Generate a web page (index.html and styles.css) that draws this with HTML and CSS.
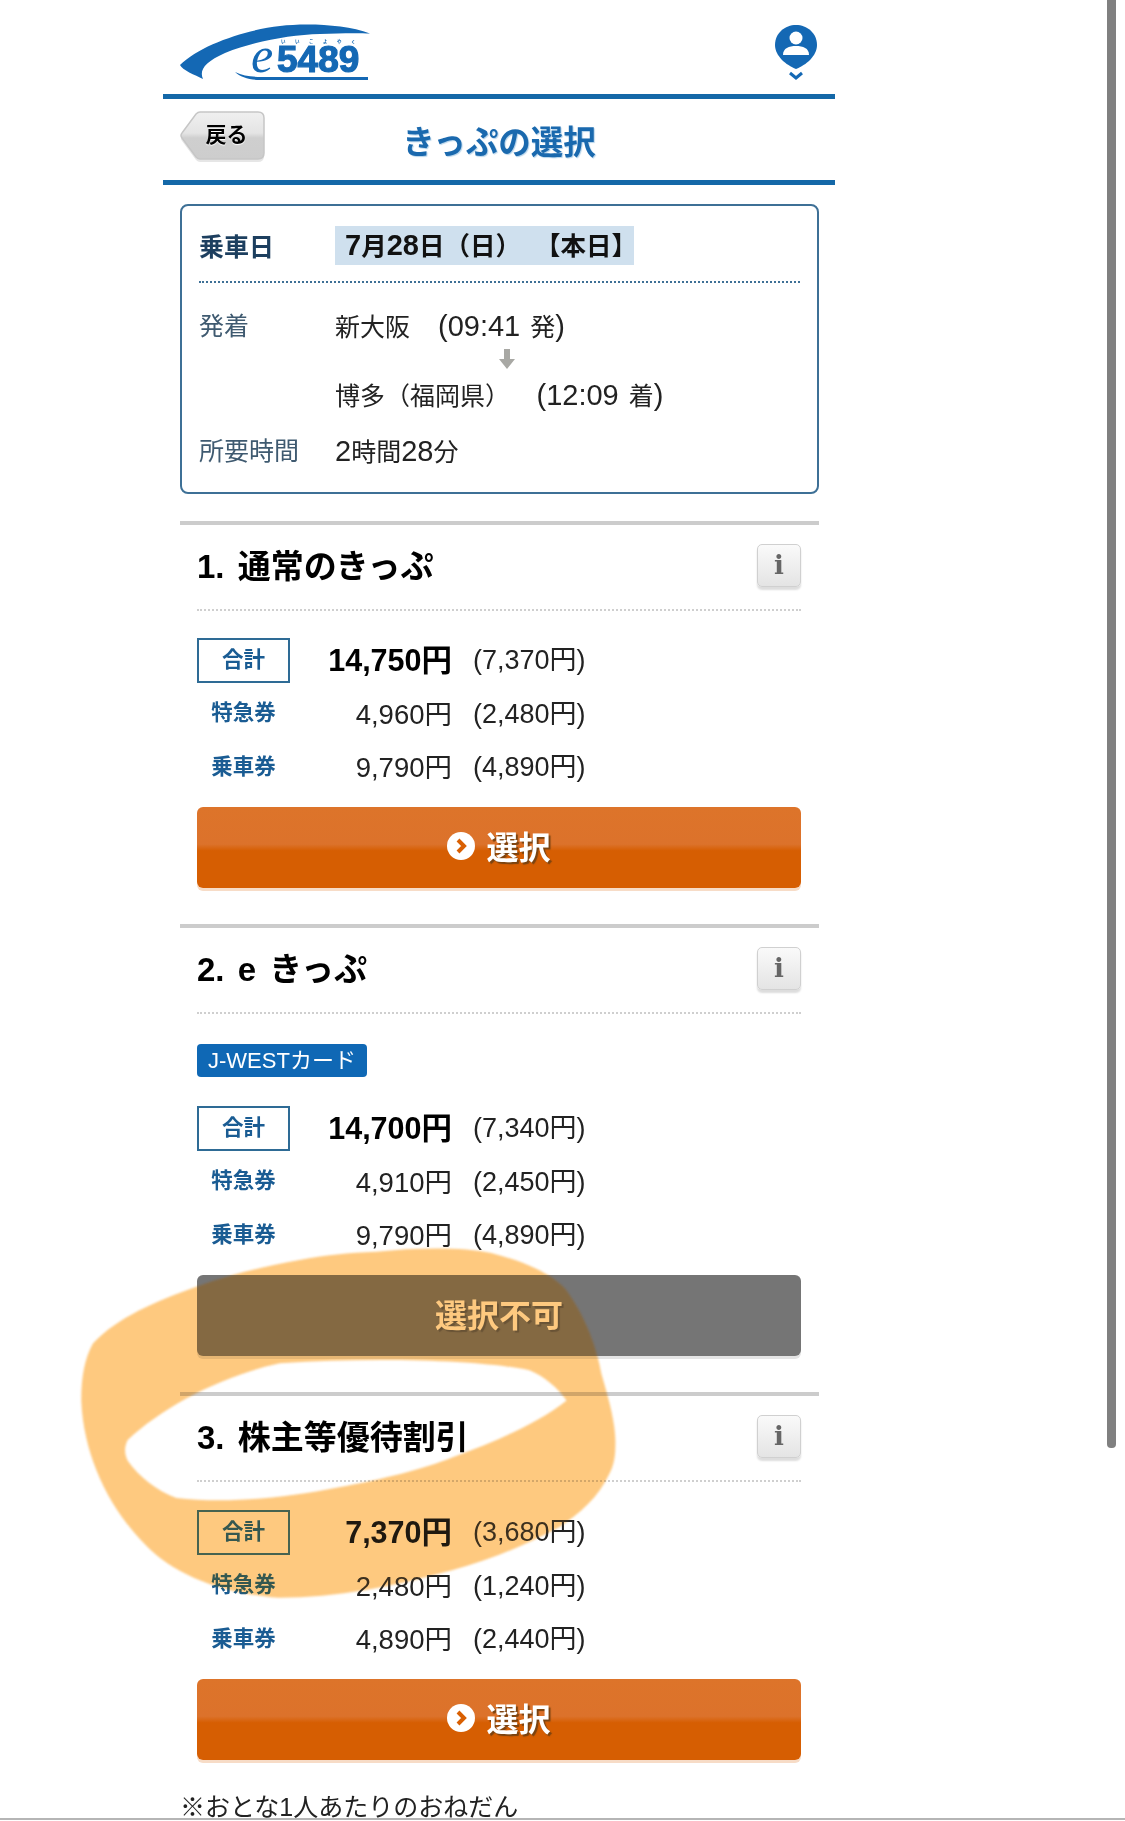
FILE: index.html
```html
<!DOCTYPE html>
<html lang="ja">
<head>
  <meta charset="utf-8">
  <title>きっぷの選択</title>
  <link rel="stylesheet" href="styles.css">
</head>
<body>
  <div class="page">
    <header class="site-header">
      <svg class="logo" viewBox="0 0 220 90" width="220" height="90">
        <path fill="#1468b4" d="M200 23.5C175 14 135 13 110 16C75 20 30 35 10 55C12 60 25 65 33 69C29 60 35 52 55 43C85 31 120 25 150 24C170 23 190 23 200 23.5Z"/>
        <path fill="#1468b4" d="M65 62C75 67 85 67 100 67L198 67L198 70L90 70C80 70 70 67 65 62Z"/>
        <text class="logo-e" x="81" y="62">e</text>
        <text class="logo-num" x="107" y="62">5489</text>
        <text class="logo-kana" x="111" y="33">いいこよやく</text>
      </svg>
      <svg class="user-icon" viewBox="0 0 44 60" width="44" height="60">
        <path fill="#1468b4" d="M22 2C33 2 43 10 43 22C43 33 32 42 22 46C12 42 1 33 1 22C1 10 11 2 22 2Z"/>
        <circle cx="22" cy="15" r="6.5" fill="#fff"/>
        <path fill="#fff" d="M9 32C9 25 15 23 22 23C29 23 35 25 35 32Z"/>
        <path fill="none" stroke="#1468b4" stroke-width="3" d="M16 50L22 55L28 50"/>
      </svg>
    </header>
    <nav class="title-bar">
      <a class="back-btn">
        <svg viewBox="0 0 85 52" width="85" height="52">
          <defs>
            <linearGradient id="backFill" x1="0" y1="0" x2="0" y2="1">
              <stop offset="0" stop-color="#f0f0f0"/>
              <stop offset="0.45" stop-color="#e4e4e4"/>
              <stop offset="0.55" stop-color="#cfcfcf"/>
              <stop offset="1" stop-color="#cdcdcd"/>
            </linearGradient>
          </defs>
          <path fill="#e6e6e6" d="M20 4H78Q84 4 84 10V45Q84 51 78 51H20Q18 51 16 49L2 30Q0 27.5 2 25L16 6Q18 4 20 4Z"/>
          <path fill="url(#backFill)" stroke="#c6c6c6" stroke-width="1.5" d="M20 1H78Q84 1 84 7V42Q84 48 78 48H20Q18 48 16 46L2 27Q0 24.5 2 22L16 3Q18 1 20 1Z"/>
        </svg>
        <span>戻る</span>
      </a>
      <h1>きっぷの選択</h1>
    </nav>

    <div class="content">
      <div class="summary">
        <div class="summary-date">
          <span class="summary-label-strong">乗車日</span>
          <span class="date-value"><span class="date-num">7</span>月<span class="date-num">28</span>日（日）&nbsp;&nbsp;【本日】</span>
        </div>
        <div class="summary-row">
          <span class="summary-label">発着</span>
          <span>新大阪　<span class="route-time"><span class="latin">(09:41</span> 発<span class="latin">)</span></span></span>
        </div>
        <svg class="route-arrow" viewBox="0 0 16 20" width="16" height="20">
          <path fill="#a8a8a4" d="M5 0H11V10H16L8 20L0 10H5Z"/>
        </svg>
        <div class="summary-row">
          <span class="summary-label"></span>
          <span>博多（福岡県）　<span class="route-time route-time-far"><span class="latin">(12:09</span> 着<span class="latin">)</span></span></span>
        </div>
        <div class="summary-row summary-time">
          <span class="summary-label">所要時間</span>
          <span><span class="latin">2</span>時間<span class="latin">28</span>分</span>
        </div>
      </div>

      <section class="ticket">
        <div class="ticket-head">
          <h2>1. 通常のきっぷ</h2>
          <button class="info-btn">i</button>
        </div>
        <div class="fares">
          <div class="fare fare-total"><span class="fare-label">合計</span><span class="fare-price">14,750円</span><span class="fare-child">(7,370円)</span></div>
          <div class="fare"><span class="fare-label">特急券</span><span class="fare-price">4,960円</span><span class="fare-child">(2,480円)</span></div>
          <div class="fare"><span class="fare-label">乗車券</span><span class="fare-price">9,790円</span><span class="fare-child">(4,890円)</span></div>
        </div>
        <a class="select-btn">
          <svg viewBox="0 0 28 28" width="28" height="28"><circle cx="14" cy="14" r="14" fill="#fff"/><path fill="none" stroke="#d95f02" stroke-width="4" d="M11 8L17 14L11 20"/></svg>
          選択
        </a>
      </section>

      <section class="ticket">
        <div class="ticket-head">
          <h2>2. e きっぷ</h2>
          <button class="info-btn">i</button>
        </div>
        <span class="card-tag">J-WESTカード</span>
        <div class="fares fares-tagged">
          <div class="fare fare-total"><span class="fare-label">合計</span><span class="fare-price">14,700円</span><span class="fare-child">(7,340円)</span></div>
          <div class="fare"><span class="fare-label">特急券</span><span class="fare-price">4,910円</span><span class="fare-child">(2,450円)</span></div>
          <div class="fare"><span class="fare-label">乗車券</span><span class="fare-price">9,790円</span><span class="fare-child">(4,890円)</span></div>
        </div>
        <a class="select-btn select-btn-off">選択不可</a>
      </section>

      <section class="ticket ticket-last">
        <div class="ticket-head">
          <h2>3. 株主等優待割引</h2>
          <button class="info-btn">i</button>
        </div>
        <div class="fares">
          <div class="fare fare-total"><span class="fare-label">合計</span><span class="fare-price">7,370円</span><span class="fare-child">(3,680円)</span></div>
          <div class="fare"><span class="fare-label">特急券</span><span class="fare-price">2,480円</span><span class="fare-child">(1,240円)</span></div>
          <div class="fare"><span class="fare-label">乗車券</span><span class="fare-price">4,890円</span><span class="fare-child">(2,440円)</span></div>
        </div>
        <a class="select-btn">
          <svg viewBox="0 0 28 28" width="28" height="28"><circle cx="14" cy="14" r="14" fill="#fff"/><path fill="none" stroke="#d95f02" stroke-width="4" d="M11 8L17 14L11 20"/></svg>
          選択
        </a>
      </section>

      <p class="note">※おとな1人あたりのおねだん</p>
    </div>
  </div>

  <!-- hand drawn marker ring on top of the screenshot: a thin white wash, then the orange -->
  <svg class="marker marker-wash" viewBox="0 0 969 1568" width="1125" height="1821">
    <use href="#ring"/>
  </svg>
  <svg class="marker marker-ink" viewBox="0 0 969 1568" width="1125" height="1821">
    <path id="ring" fill-rule="evenodd" d="M324 1078C360 1074 400 1074 423 1079C450 1086 475 1096 488 1111C505 1135 514 1160 518 1183C526 1210 531 1230 530 1246C530 1256 528 1263 525 1269C515 1290 500 1303 482 1315C450 1332 420 1344 390 1352C340 1366 290 1376 240 1376C190 1372 150 1356 125 1330C95 1300 72 1255 70 1206C70 1185 73 1170 80 1157C100 1135 135 1120 169 1108C200 1097 230 1090 258 1085C280 1081 300 1079 324 1078ZM488 1206C480 1195 470 1186 456 1180C420 1172 330 1168 241 1174C190 1185 140 1212 110 1240C107 1246 107 1252 110 1258C120 1272 135 1284 152 1290C195 1295 245 1290 291 1281C330 1274 365 1265 390 1255C425 1242 465 1225 488 1206Z"/>
  </svg>
  <div class="scroll-thumb"></div>
  <div class="bottom-line"></div>
</body>
</html>
```

FILE: styles.css
```css
html, body {
  margin: 0;
  height: 1821px;
  overflow: hidden;
  background: #fff;
}

body {
  position: relative;
  font-family: "Liberation Sans", "Noto Sans CJK JP", sans-serif;
  font-size: 25px;
  color: #222;
}

.page {
  width: 672px;
  margin-left: 163px;
}

.site-header {
  height: 94px;
  border-bottom: 5px solid #1468a8;
  display: flex;
  justify-content: space-between;
  align-items: flex-start;
}

.logo {
  margin: 10px 0 0 7px;
}

.logo-e {
  font-family: "Liberation Serif", serif;
  font-style: italic;
  font-size: 50px;
  fill: #1468b4;
}

.logo-num {
  font-family: "Liberation Sans", sans-serif;
  font-weight: bold;
  font-size: 37px;
  fill: #1468b4;
  stroke: #1468b4;
  stroke-width: 1.2px;
}

.logo-kana {
  font-size: 4.5px;
  font-weight: bold;
  letter-spacing: 9.5px;
  fill: #1468b4;
}

.user-icon {
  margin: 23px 17px 0 0;
}

.title-bar {
  height: 81px;
  border-bottom: 5px solid #1468a8;
  display: grid;
  grid-template-columns: 1fr auto 1fr;
  align-items: center;
}

.title-bar h1 {
  margin: 0;
  font-size: 32.5px;
  font-weight: bold;
  color: #1a69ae;
  text-shadow: 1px 1px 1px #b5d3ea;
}

.back-btn {
  justify-self: start;
  margin: 0 0 6px 17px;
  width: 85px;
  height: 52px;
  position: relative;
  display: flex;
  align-items: center;
  justify-content: center;
  font-size: 21px;
  font-weight: bold;
  color: #000;
}

.back-btn svg {
  position: absolute;
  left: 0;
  top: 0;
}

.back-btn span {
  position: relative;
  left: 4px;
  top: -4px;
  text-shadow: 0 1px 1px #fff;
}

.content {
  padding: 19px 16px 0 17px;
}

.summary {
  height: 290px;
  box-sizing: border-box;
  border: 2px solid #3e7096;
  border-radius: 8px;
  padding: 20px 17px 0;
}

.summary-date {
  display: flex;
  align-items: center;
  height: 39px;
  padding-bottom: 16px;
  border-bottom: 2px dotted #3e7096;
}

.summary-label-strong {
  width: 136px;
  flex-shrink: 0;
  padding-bottom: 2px;
  color: #1d3f5f;
  font-weight: bold;
  font-size: 25px;
}

.date-value {
  width: 299px;
  box-sizing: border-box;
  height: 39px;
  line-height: 39px;
  padding-left: 10px;
  background: #cfe0ee;
  color: #111;
  font-weight: bold;
  font-size: 25.5px;
  white-space: nowrap;
}

.date-num {
  font-size: 29px;
}

.summary-row {
  display: flex;
  height: 40px;
  line-height: 40px;
  white-space: nowrap;
}

.summary-date + .summary-row {
  margin-top: 23px;
}

.summary-label {
  width: 136px;
  flex-shrink: 0;
  color: #3f5a70;
}

.latin {
  font-size: 29px;
}

.route-time {
  margin-left: 3px;
  word-spacing: 3px;
}

.route-time-far {
  margin-left: 14px;
}

.route-arrow {
  display: block;
  margin: 3px 0 6px 300px;
}

.summary-time {
  margin-top: 16px;
}

.ticket {
  margin-top: 27px;
  border-top: 4px solid #cccccc;
  padding: 0 18px 0 17px;
}

.ticket + .ticket {
  margin-top: 36px;
}

.ticket-head {
  height: 86px;
  box-sizing: border-box;
  padding-bottom: 4px;
  border-bottom: 2px dotted #cfcfcf;
  display: flex;
  align-items: center;
  justify-content: space-between;
}

.ticket-head h2 {
  margin: 0 0 3px;
  font-size: 33px;
  font-weight: bold;
  word-spacing: 4px;
  color: #000;
}

.info-btn {
  width: 44px;
  height: 43px;
  padding: 0;
  border: 1px solid #d0d0d0;
  border-radius: 5px;
  background: linear-gradient(#fafafa, #e4e4e4);
  box-shadow: 0 3px 2px #ddd;
  font-family: "DejaVu Serif", serif;
  font-size: 26px;
  font-weight: bold;
  color: #666;
}

.fares {
  margin-top: 26px;
  display: flex;
  flex-direction: column;
  gap: 8.5px;
}

.fares-tagged {
  margin-top: 28px;
}

.ticket-last .fares {
  margin-top: 27px;
}

.fare {
  display: grid;
  grid-template-columns: 93px 162px auto;
  height: 45px;
  line-height: 45px;
  align-items: center;
  font-size: 27.5px;
  white-space: nowrap;
}

.fare-child {
  padding: 1px 0 0 21px;
  font-size: 27px;
}

.fare-label {
  text-align: center;
  font-size: 21.5px;
  font-weight: bold;
  color: #1a5c93;
}

.fare-price {
  padding-top: 1px;
  text-align: right;
}

.fare-total .fare-label {
  box-sizing: border-box;
  height: 45px;
  line-height: 41px;
  border: 2px solid #2e6b95;
}

.fare-total .fare-price {
  padding-top: 0;
  font-size: 30.5px;
  font-weight: bold;
  color: #000;
}

.card-tag {
  display: block;
  width: fit-content;
  margin-top: 30px;
  height: 33px;
  line-height: 33px;
  padding: 0 11px;
  border-radius: 4px;
  background: #0f68b5;
  color: #fff;
  font-size: 22px;
}

.select-btn {
  margin-top: 18px;
  height: 81px;
  box-sizing: border-box;
  padding-bottom: 6px;
  border-radius: 6px;
  background: linear-gradient(#dd742a 0, #dc722b 46%, #d65e02 54%, #d65e02 100%);
  box-shadow: 0 3px 0 #f7dcc7;
  display: flex;
  align-items: center;
  justify-content: center;
  gap: 11px;
  color: #fff;
  font-size: 32px;
  font-weight: bold;
  text-shadow: 2px 2px 1px #7a4310;
}

.select-btn svg {
  margin-top: 2px;
}

.select-btn-off {
  background: #757575;
  box-shadow: 0 3px 0 #e4e4e4;
  text-shadow: 2px 2px 1px #555;
}

.note {
  margin: 27px 0 0 0;
  line-height: 40px;
  font-size: 25px;
  white-space: nowrap;
}

.marker {
  position: absolute;
  left: 0;
  top: 0;
  pointer-events: none;
  filter: blur(1.2px);
}

.marker-wash {
  fill: #fff;
  fill-opacity: 0.12;
}

.marker-ink {
  fill: #fec97f;
  mix-blend-mode: multiply;
}

.scroll-thumb {
  position: absolute;
  left: 1107px;
  top: 0;
  width: 9px;
  height: 1448px;
  background: #808080;
  border-radius: 0 0 4px 4px;
}

.bottom-line {
  position: absolute;
  left: 0;
  right: 0;
  bottom: 1px;
  height: 2px;
  background: #b5b5b5;
}
```
